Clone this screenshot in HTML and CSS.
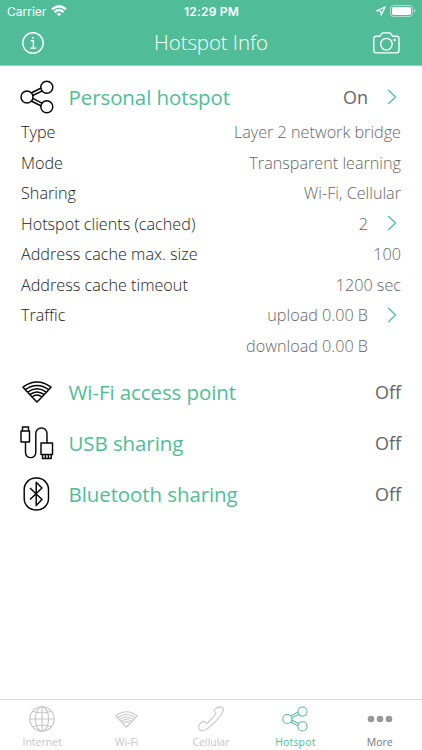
FILE: index.html
```html
<!DOCTYPE html>
<html lang="en">
<head>
<meta charset="utf-8">
<title>Hotspot Info</title>
<link rel="stylesheet" href="styles.css">
</head>
<body>
<svg class="defs" width="0" height="0" aria-hidden="true">
  <symbol id="share" viewBox="0 0 34 34">
    <path d="M11.2 13 21.2 8M12.7 15.5 22.5 10.8M12.7 18.4 22.5 23.3M11.2 21 21.2 26"/>
    <circle cx="7" cy="17" r="6"/><circle cx="26.8" cy="7.3" r="6"/><circle cx="26.8" cy="26.7" r="6"/>
  </symbol>
  <symbol id="wifi" viewBox="0 0 30 22">
    <path d="M1 6.2Q15-4.3 29 6.2L26.7 8.7Q15 .2 3.3 8.7ZM5.2 11 3.3 8.7M5.5 11.2Q15 4.2 24.5 11.2L26.7 8.7M5.5 11.2 7.8 13.6Q15 8.2 22.2 13.6L24.5 11.2M7.8 13.6 10 16Q15 12.2 20 16L22.2 13.6M10 16 15 21 20 16"/>
  </symbol>
  <symbol id="chevron" viewBox="0 0 10 16"><path d="M1.2 1 8.6 8 1.2 15"/></symbol>
</svg>
<header class="top">
  <div class="status">
    <div class="carrier">Carrier
      <svg width="16" height="12" viewBox="0 0 16 12" fill="none" stroke="#fff" stroke-width="2.3"><path d="M1 4.4Q8-2 15 4.4M3.5 7.1Q8 3 12.5 7.1"/><path d="M8 11.3 5.7 9Q8 7 10.3 9Z" fill="#fff" stroke="none"/></svg>
    </div>
    <div class="time">12:29 PM</div>
    <div class="power">
      <svg width="10" height="10" viewBox="0 0 10 10" fill="none" stroke="#fff" stroke-width="1.1"><path d="M9 1 1 4.7 4.9 5.2 5.3 9Z"/></svg>
      <svg width="26" height="12" viewBox="0 0 26 12"><rect x=".5" y=".5" width="22" height="11" rx="3" fill="none" stroke="#fff" stroke-opacity=".5"/><rect x="2" y="2" width="19" height="8" rx="1.7" fill="#fff"/><path d="M24 4Q25.4 4.7 25.4 6T24 8Z" fill="#fff" fill-opacity=".5"/></svg>
    </div>
  </div>
  <div class="navbar">
    <svg width="22" height="22" viewBox="0 0 22 22" fill="none" stroke="#fff" stroke-width="1.4"><circle cx="11" cy="11" r="10.2"/><path d="M8.7 8.7H11.4V16M8.3 16.1H14.2"/><circle cx="11" cy="5.8" r="1" fill="#fff" stroke="none"/></svg>
    <h1>Hotspot Info</h1>
    <svg width="27" height="22" viewBox="0 0 27 22" fill="none" stroke="#fff" stroke-width="1.35"><path d="M3 4.2H7L8.8 1.6Q9.3.8 10.3.8H16.4Q17.4.8 17.9 1.6L19.7 4.2H23.7Q26 4.2 26 6.5V18.5Q26 20.8 23.7 20.8H3Q.8 20.8.8 18.5V6.5Q.8 4.2 3 4.2Z"/><circle cx="13.4" cy="12.1" r="5.8"/><circle cx="21.6" cy="7.9" r="1.3" fill="#fff" stroke="none"/></svg>
  </div>
</header>
<main>
  <section class="heading first">
    <span class="icon"><svg class="line" width="34" height="34"><use href="#share"/></svg></span>
    <h2>Personal hotspot</h2><span class="state">On</span>
    <svg class="chevron" width="10" height="16"><use href="#chevron"/></svg>
  </section>
  <dl>
    <div class="row"><dt>Type</dt><dd>Layer 2 network bridge</dd></div>
    <div class="row"><dt>Mode</dt><dd>Transparent learning</dd></div>
    <div class="row"><dt>Sharing</dt><dd>Wi-Fi, Cellular</dd></div>
    <div class="row"><dt>Hotspot clients (cached)</dt><dd>2</dd><svg class="chevron" width="10" height="16"><use href="#chevron"/></svg></div>
    <div class="row"><dt>Address cache max. size</dt><dd>100</dd></div>
    <div class="row"><dt>Address cache timeout</dt><dd>1200 sec</dd></div>
    <div class="row"><dt>Traffic</dt><dd>upload 0.00 B</dd><svg class="chevron" width="10" height="16"><use href="#chevron"/></svg></div>
    <div class="row extra"><dd>download 0.00 B</dd></div>
  </dl>
  <section class="heading">
    <span class="icon"><svg class="line" width="30" height="22"><use href="#wifi"/></svg></span>
    <h2>Wi-Fi access point</h2><span class="state">Off</span>
  </section>
  <section class="heading">
    <span class="icon"><svg class="line" width="34" height="34" viewBox="0 0 34 34"><path d="M2.5 5V1H8.5V5M1 5H9.5V16H1ZM5.5 16V26.5A5 5 0 0 0 15.8 26.5V7.5A5.5 5.5 0 0 1 27 7.5V17M21 17H32.5V28.5H21ZM22.5 28.5V32.5H31.2V28.5M25.4 29V32M28.4 29V32"/></svg></span>
    <h2>USB sharing</h2><span class="state">Off</span>
  </section>
  <section class="heading">
    <span class="icon"><svg class="line" width="34" height="34" viewBox="0 0 34 34"><rect x="4.2" y="1" width="24.3" height="32" rx="11.5"/><path d="M10 11 22 22.5 16.2 28.5V5.2L22 11 10 22.5"/></svg></span>
    <h2>Bluetooth sharing</h2><span class="state">Off</span>
  </section>
</main>
<nav class="tabs">
  <a class="tab"><span><svg width="26" height="26" viewBox="0 0 26 26"><circle cx="13" cy="13" r="12.2"/><ellipse cx="13" cy="13" rx="6.6" ry="12.2"/><path d="M13 .8V25.2M.8 13H25.2M3.6 5.3Q13 8.8 22.4 5.3M3.6 20.7Q13 17.2 22.4 20.7"/></svg></span>Internet</a>
  <a class="tab"><span><svg width="23" height="17"><use href="#wifi"/></svg></span>Wi-Fi</a>
  <a class="tab"><span><svg width="26" height="26" viewBox="0 0 26 26"><path d="M3.2 24.7C.2 24-.1 20.2 2.1 17.6L4.3 15.7Q6 14.8 7.3 16.3Q8.5 18 10 16.5C12.9 13.8 15.3 11.2 17.5 8.5Q18.5 7.3 17.2 6.3C15.9 5.4 15.6 4.2 17 3.1C20.5.1 25.2.2 25.3 3.4C25.4 6 21.5 11.2 17.8 15.1C12.9 20.4 7 25.4 3.2 24.7Z"/></svg></span>Cellular</a>
  <a class="tab active"><span><svg width="26" height="26"><use href="#share"/></svg></span>Hotspot</a>
  <a class="tab more"><span><svg width="26" height="8" viewBox="0 0 26 8"><circle cx="4" cy="4" r="3.3"/><circle cx="13" cy="4" r="3.3"/><circle cx="22" cy="4" r="3.3"/></svg></span>More</a>
</nav>
</body>
</html>
```
FILE: styles.css
```css
* { box-sizing: border-box; }
body { margin: 0; width: 422px; height: 750px; display: flex; flex-direction: column; background: #fff; font-family: "Open Sans", sans-serif; overflow: hidden; }
h1, h2, dl, dt, dd { margin: 0; }
svg { display: block; flex: none; }
.defs { position: absolute; }
.top { height: 66px; background: #50bd98; color: #fff; border-bottom: 1px solid #91d5be; }
.status { height: 22px; display: grid; grid-template-columns: 1fr auto 1fr; align-items: center; padding: 0 6px 0 7px; font: 12px Inter, sans-serif; }
.carrier { display: flex; align-items: center; gap: 5px; }
.time { font-weight: 600; letter-spacing: .2px; }
.power { display: flex; justify-content: flex-end; align-items: center; gap: 4px; }
.navbar { height: 42px; display: flex; align-items: center; justify-content: space-between; padding: 0 22px; }
h1 { font-size: 20.5px; letter-spacing: -.1px; font-weight: 300; line-height: 38px; padding: 0 0 2px 5px; }
main { flex: 1; padding: 11px 21px 0 20px; }
.heading { height: 51px; display: flex; align-items: center; }
.first { height: 40px; }
.icon { width: 34px; display: flex; justify-content: center; }
.line { fill: none; stroke: #050505; stroke-width: 1.45; stroke-linejoin: round; }
h2 { margin-left: 14.5px; flex: 1; font-size: 20.5px; letter-spacing: -.09px; font-weight: 400; color: #50bd98; }
.state { font-size: 18px; font-weight: 400; color: #666; }
.chevron { fill: none; stroke: #50bd98; stroke-width: 1.25; margin: 0 4px 1px 19px; }
dl { height: 249px; font-size: 16.2px; font-weight: 300; }
.row { height: 30.5px; display: flex; align-items: center; padding-left: 1px; }
dt { color: #222; }
dd { margin-left: auto; color: #666; }
.extra { padding-right: 33px; }
.tabs { height: 51px; border-top: 1px solid #d8d8d8; display: grid; grid-template-columns: repeat(5, 1fr); }
.tab { display: flex; flex-direction: column; align-items: center; color: #c6c6c6; font-size: 10.5px; line-height: 14px; padding-top: 3px; }
.tab span { height: 32px; display: flex; align-items: center; }
.tab svg { fill: none; stroke: currentColor; stroke-width: 1.1; }
.tab use { stroke-width: 1.35; }
.tab.active { color: #50bd98; letter-spacing: .15px; }
.tab.more { color: #777; }
.tab.more svg { fill: #999; stroke: none; }
```
